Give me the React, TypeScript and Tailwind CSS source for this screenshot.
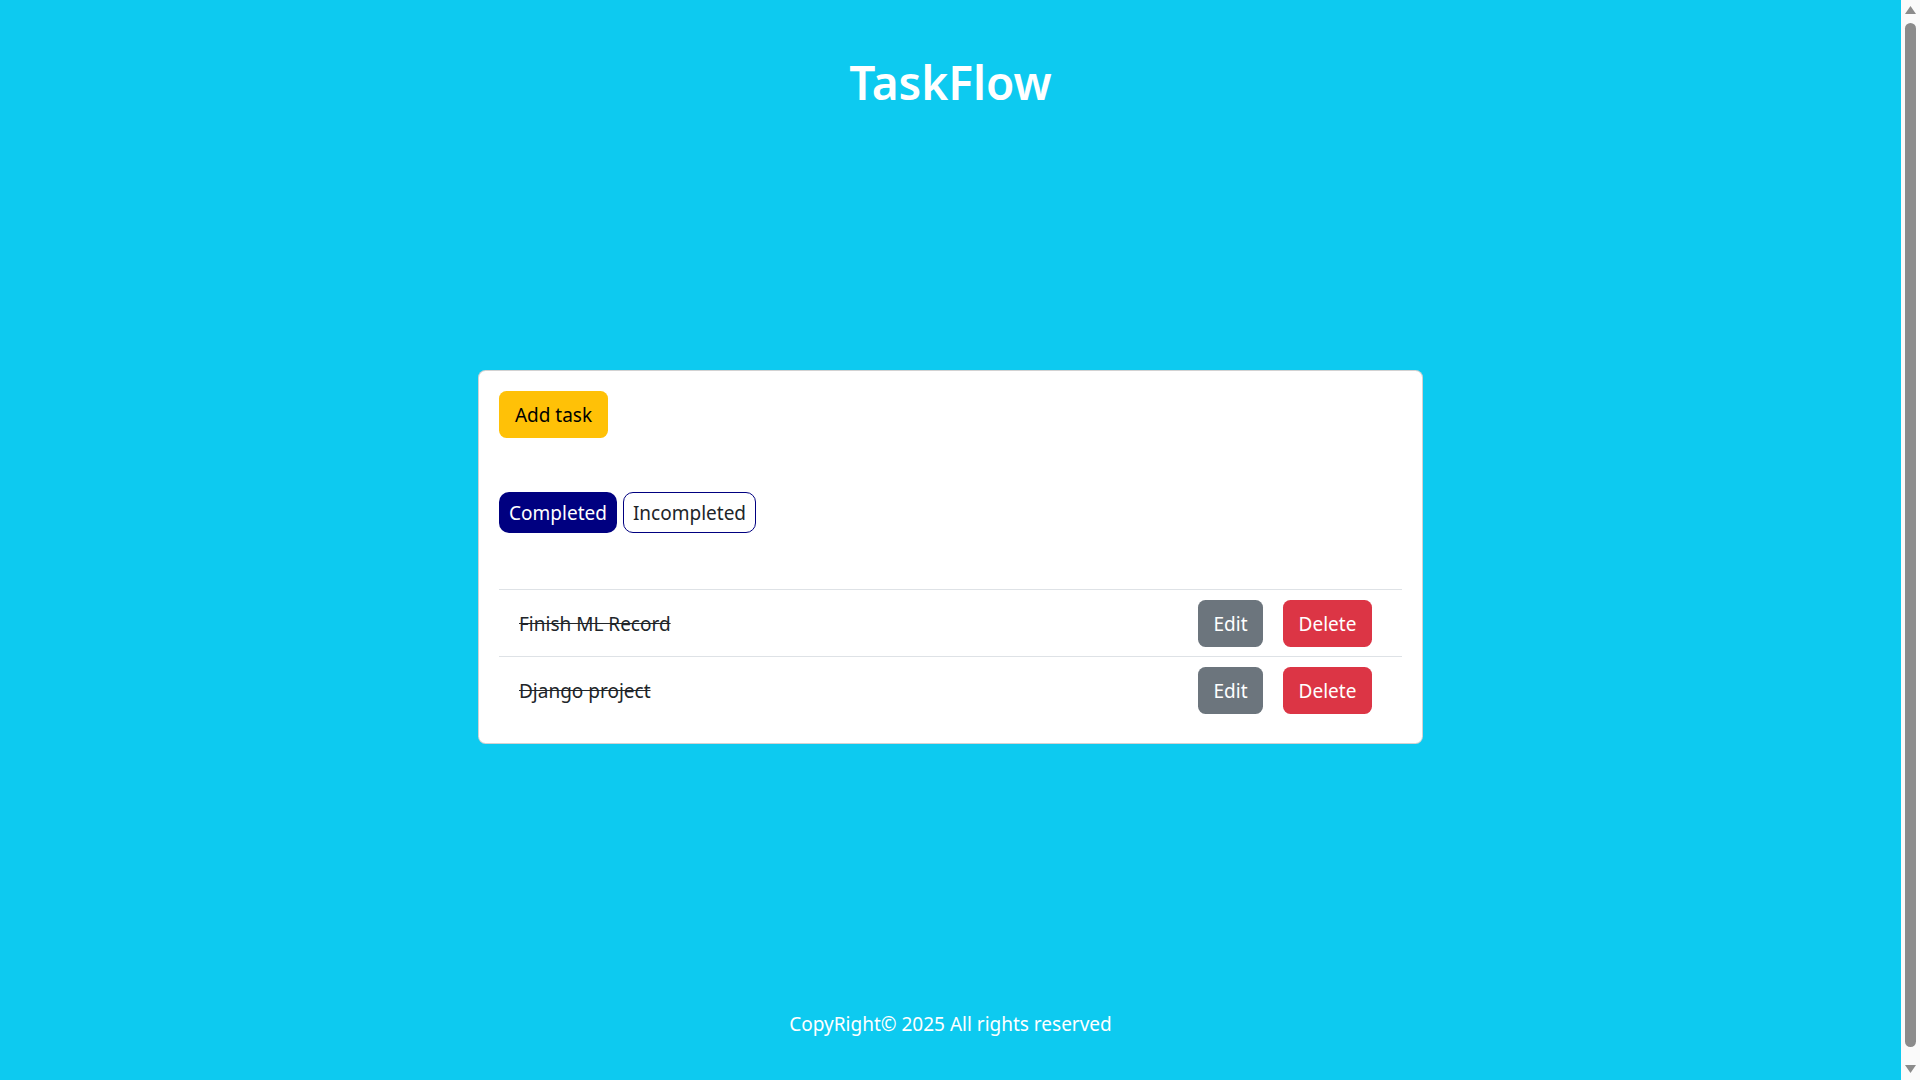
import React from "react";

const font = { fontFamily: '"Noto Sans", "Open Sans", sans-serif' };

function Row({ text }: { text: string }) {
  return (
    <div className="flex h-[67px] items-center border-t border-[#dee2e6] pl-[20px] pr-[30px]">
      <span className="flex-1 pt-[2px] text-[19px] text-[#212529] line-through">{text}</span>
      <button className="flex h-[47px] w-[65px] items-center justify-center rounded-[7.5px] bg-[#6c757d] pt-[2px] text-[19px] text-white">
        Edit
      </button>
      <button className="ml-[20px] flex h-[47px] w-[89px] items-center justify-center rounded-[7.5px] bg-[#dc3545] pt-[2px] text-[19px] text-white">
        Delete
      </button>
    </div>
  );
}

export default function App() {
  return (
    <div className="flex h-[1080px] w-full overflow-hidden" style={font}>
      <div className="flex flex-1 flex-col bg-[#0dcaf0]">
        <h1 className="pt-[52px] text-center text-[46px] font-semibold leading-[60px] text-white">TaskFlow</h1>
        <div className="mx-auto mt-[258px] w-[945px] rounded-[7.5px] border border-[rgba(0,0,0,0.175)] bg-white p-[20px]">
          <button className="flex h-[47px] w-[109px] items-center justify-center rounded-[7.5px] bg-[#ffc107] pt-[2px] text-[19px] text-black">
            Add task
          </button>
          <div className="mt-[54px] flex gap-[6px]">
            <button className="flex h-[41px] w-[118px] items-center justify-center rounded-[10px] bg-[#000080] pt-[2px] text-[19px] text-white">
              Completed
            </button>
            <button className="flex h-[41px] w-[133px] items-center justify-center rounded-[10px] border border-[#000080] bg-white pt-[2px] text-[19px] text-[#212529]">
              Incompleted
            </button>
          </div>
          <div className="mt-[56px]">
            <Row text="Finish ML Record" />
            <Row text="Django project" />
          </div>
        </div>
        <p className="mt-[265px] text-center text-[19px] leading-[30px] text-white">CopyRight© 2025 All rights reserved</p>
      </div>
      <div className="flex w-[19px] flex-col items-center bg-[#fafafa]">
        <svg width="19" height="19" viewBox="0 0 19 19" className="shrink-0">
          <polygon points="4,14 15,14 9.5,6" fill="#8b8b8b" />
        </svg>
        <div className="mt-[4px] w-[11px] flex-1 rounded-full bg-[#8b8b8b]" />
        <svg width="19" height="33" viewBox="0 0 19 33" className="shrink-0">
          <polygon points="4,18 15,18 9.5,26" fill="#8b8b8b" />
        </svg>
      </div>
    </div>
  );
}
